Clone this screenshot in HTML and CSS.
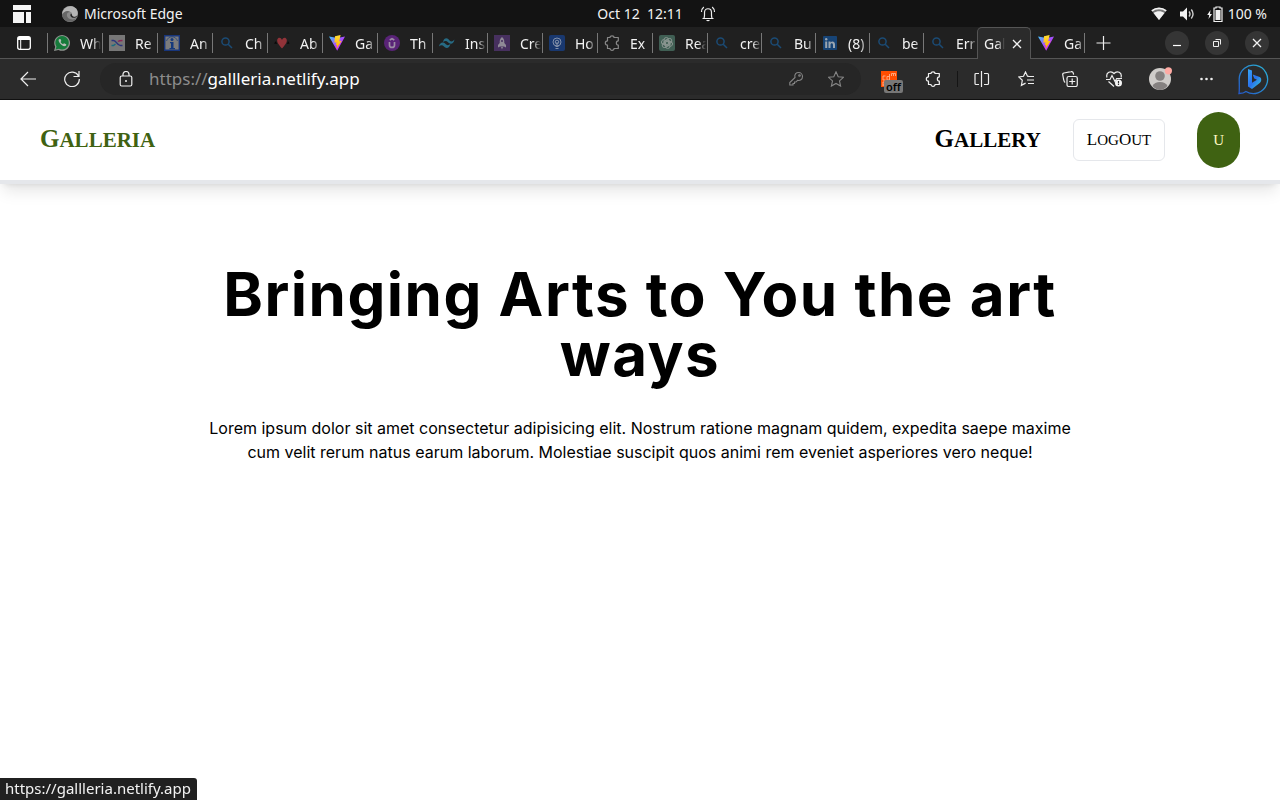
FILE: index.html
```html
<!DOCTYPE html>
<html lang="en">
<head>
<meta charset="utf-8">
<meta name="viewport" content="width=device-width, initial-scale=1">
<title>Galleria</title>
<link rel="stylesheet" href="styles.css">
</head>
<body>
<svg class="sprite" aria-hidden="true">
  <defs>
    <linearGradient id="vite-a" x1="0" y1="0" x2="1" y2="1"><stop offset="0" stop-color="#41c8ff"/><stop offset=".6" stop-color="#bd34fe"/></linearGradient>
    <linearGradient id="vite-b" x1="0" y1="0" x2="0" y2="1"><stop offset="0" stop-color="#ffdd35"/><stop offset="1" stop-color="#ffa800"/></linearGradient>
    <linearGradient id="bing-a" x1="0" y1="0" x2="1" y2="1"><stop offset="0" stop-color="#38a8f5"/><stop offset=".5" stop-color="#2a70ec"/><stop offset="1" stop-color="#35d3d8"/></linearGradient>
    <linearGradient id="bing-b" x1="1" y1="0" x2="0" y2="1"><stop offset="0" stop-color="#2bb5d8"/><stop offset="1" stop-color="#2458c8"/></linearGradient>
  </defs>
  <symbol id="search" viewBox="0 0 16 16"><circle cx="6.500" cy="6.500" r="3.600" fill="none" stroke="#1b4b75" stroke-width="1.500"/><path d="M9.200 9.200 13 13" stroke="#1b4b75" stroke-width="1.500"/></symbol>
  <symbol id="vite" viewBox="0 0 16 16"><path d="M0 1.500 8.200 15.800 16 1.500 8.500 3Z" fill="url(#vite-a)"/><path d="M11.600 0 6 1.200 5.400 7.700l2.100-.4-.8 3 1.500-.4-.9 4.300 5.400-8.400-2.500.4Z" fill="url(#vite-b)"/></symbol>
  <symbol id="puzzle" viewBox="0 0 16 16"><path d="M3.500 2.500H6C6 .2 10 .2 10 2.500H14.300V5.800C11.700 5.800 11.700 10.200 14.300 10.200V13.500H10C10 15.900 6 15.900 6 13.500H3.500V10.200C.6 10.200.6 5.800 3.500 5.800Z" fill="none" stroke="currentColor" stroke-width="1.200" stroke-linejoin="round"/></symbol>
  <symbol id="close" viewBox="0 0 16 16"><path d="m4 4 8 8M12 4l-8 8" fill="none" stroke="currentColor" stroke-width="1.300"/></symbol>
</svg>

<header class="desktop-bar">
  <div class="desktop-left">
    <svg class="icon-lg" viewBox="0 0 18 18" aria-hidden="true"><path d="M0 0h18v5H0zM0 7h11v11H0zM13 7h5v11h-5z" fill="#f5f5f5"/></svg>
    <svg class="icon edge-icon" viewBox="0 0 16 16" aria-hidden="true"><circle cx="8" cy="8" r="8" fill="#8a8a8a"/><path d="M0 8C1 2 6-1 11 .6 16 2.500 17 8 14 10 11 11 9 10 10 8 10 5 4 4 0 8Z" fill="#b5b5b5"/><path d="M5 8c-1 4 4 7 9 4.500C10 18 1 16 0 9 2 5 6 4 8 6 6 6 5 7 5 8Z" fill="#666"/><path d="M9 7.500c1.500 1 .5 2.500 2.500 3.200 1.700.5 3 0 4-1-.6 1.800-3.500 2.600-5.500 1.800C8 10.500 8 8.500 9 7.500Z" fill="#222"/></svg>
    <span>Microsoft Edge</span>
  </div>
  <time>Oct 12&nbsp; 12:11</time>
  <div class="desktop-right">
    <svg class="icon bell" viewBox="0 0 16 16" fill="none" stroke="#eee" stroke-width="1.200" aria-hidden="true"><path d="M2.500 12.500h11M4 12.500C4.800 10 4.500 8.500 4.500 6.500c0-5 7-5 7 0 0 2-.3 3.500.5 6M3.800 1C2 2.500 1.500 4 1.500 6M12.200 1c1.800 1.500 2.300 3 2.300 5"/><path d="M6 14h4q-2 2.500-4 0Z" fill="#eee" stroke="none"/></svg>
    <svg class="icon" viewBox="0 0 16 16" aria-hidden="true"><path d="M.5 4.500C5 .9 11 .9 15.500 4.500L8 14Z" fill="#777"/><path d="M2.500 7C6 4.500 10 4.500 13.500 7L8 14Z" fill="#f2f2f2"/><path d="M.8 4.800C5 1.500 11 1.500 15.200 4.800" stroke="#f2f2f2" fill="none" stroke-width="1.600"/></svg>
    <svg class="icon volume" viewBox="0 0 16 16" aria-hidden="true"><path d="M1 5.500h3L8 1.500v13L4 10.500H1z" fill="#f2f2f2"/><path d="M10 5.500q2 2.500 0 5M12.300 3.500q3.500 4.500 0 9" stroke="#ccc" fill="none" stroke-width="1.400"/></svg>
    <svg class="icon" viewBox="0 0 16 16" aria-hidden="true"><path d="M3.500 4 .2 9h2l-.7 4L5 8H3z" fill="#f2f2f2"/><path d="M9 1h4v1h2v13.500H7V2h2z" fill="none" stroke="#f2f2f2" stroke-width="1.200"/><path d="M8.500 4h5v10h-5z" fill="#f2f2f2"/></svg>
    <span class="battery">100 %</span>
  </div>
</header>

<div class="tab-bar">
  <button class="tab-actions" aria-label="Tab actions"><svg class="icon" viewBox="0 0 16 16" aria-hidden="true"><rect x="1.700" y="1.700" width="12.600" height="12.600" rx="2" fill="none" stroke="#fff" stroke-width="1.300"/><path d="M2 2h12v3H2z" fill="#fff"/><path d="M4.700 4v10" stroke="#fff"/></svg></button>
  <nav class="tabs" aria-label="Browser tabs">
    <button class="tab"><svg class="icon" viewBox="0 0 16 16" aria-hidden="true"><path d="m0 16 1.200-4.200A7.900 7.900 0 1 1 4.500 15Z" fill="#8e9490"/><path d="m1.600 14.400.9-2.900A6.700 6.700 0 1 1 5 13.700Z" fill="#167b3b"/><path d="M5.700 4c-1.500.3-1.500 2 0 4 1.800 2.500 4 3.500 5.500 3 1-.3 1.200-1.200 1-1.800L10 8.200 9 9.300C7.800 8.800 7 8 6.500 7l.8-1-.8-2Z" fill="#b8bdb9"/></svg><span>Wh</span></button>
    <button class="tab"><svg class="icon" viewBox="0 0 16 16" aria-hidden="true"><path d="M0 0h16v16H0z" fill="#777"/><path d="M2.500 5.500h2c3 0 3.500 5 7 5h2" stroke="#2b357c" stroke-width="1.500" fill="none"/><path d="M2.500 10.500h2L6.500 9" stroke="#176c7f" stroke-width="1.500" fill="none"/><path d="M9 6.500c1-1 2-1 4.500-1" stroke="#8b2855" stroke-width="1.500" fill="none"/></svg><span>Re</span></button>
    <button class="tab"><svg class="icon" viewBox="0 0 16 16" aria-hidden="true"><path d="M.7.7h14.600v14.600H.7z" fill="#7c7c7c" stroke="#17357b" stroke-width="1.400"/><circle cx="8" cy="4.500" r="1.500" fill="#15397c"/><path d="M6 7h3.500v6H11v1.300H5.500V13H7V8.300H6z" fill="#15397c"/><path d="M2.500 6Q4 1.800 8 1.800T13.500 6" stroke="#15397c" stroke-width=".7" fill="none"/></svg><span>An</span></button>
    <button class="tab"><svg class="icon" aria-hidden="true"><use href="#search"/></svg><span>Ch</span></button>
    <button class="tab"><svg class="icon" viewBox="0 0 16 16" aria-hidden="true"><path d="m2 6-2 2.500 3 .5zM14 6l1.500 2.500L13 9z" fill="#080808"/><path d="M8 13.500C4 9 2.700 7 3.300 4.500 4.300 2 7 2.500 8 5c1-2.500 3.700-3 4.700-.5.600 2.500-.7 4.500-4.700 9Z" fill="#913339"/></svg><span>Ab</span></button>
    <button class="tab"><svg class="icon" aria-hidden="true"><use href="#vite"/></svg><span>Ga</span></button>
    <button class="tab"><svg class="icon" viewBox="0 0 16 16" aria-hidden="true"><circle cx="8" cy="8" r="8" fill="#592377"/><path d="M5.500 7v3.200c0 3 5 3 5 0V7M5.700 5 8 3.800 10.300 5" fill="none" stroke="#9b8ca3" stroke-width="1.700"/></svg><span>Th</span></button>
    <button class="tab"><svg class="icon" viewBox="0 0 16 16" aria-hidden="true"><path d="M4 7c1-5 5-4 6-2 1.500 2 3.500 2 5.500-.5-1 5.500-5 4.500-6.500 2.700C7.500 5.500 6 5.500 4 7ZM0 11.500c1-5 5-4.500 6.500-2.500 1.500 1.700 3.500 1.500 5-.5-1 5.500-5 5-6.500 3-1.500-1.700-3.500-1.500-5 0Z" fill="#276b84"/></svg><span>Ins</span></button>
    <button class="tab"><svg class="icon" viewBox="0 0 16 16" aria-hidden="true"><path d="M0 0h16v16H0z" fill="#47305f"/><path d="M8 2c2 1.500 2.500 3.500 2.300 6l1.700 2v2.500L10 11.500H6L4 12.500V10l1.700-2C5.500 5.500 6 3.500 8 2Zm-1 10h2l-1 2.500Z" fill="#8f8a96"/><circle cx="8" cy="6" r="1" fill="#47305f"/></svg><span>Cre</span></button>
    <button class="tab"><svg class="icon" viewBox="0 0 16 16" aria-hidden="true"><rect width="16" height="16" rx="2" fill="#19386f"/><circle cx="8" cy="7" r="4" fill="none" stroke="#8290a9"/><circle cx="8" cy="7" r="1.800" fill="none" stroke="#8290a9"/><path d="M6.500 11.500h3M6.500 13.500h3M8 7v4" stroke="#8290a9"/></svg><span>Ho</span></button>
    <button class="tab"><svg class="icon dim" aria-hidden="true"><use href="#puzzle"/></svg><span>Ex</span></button>
    <button class="tab"><svg class="icon" viewBox="0 0 16 16" aria-hidden="true"><rect width="16" height="16" rx="2" fill="#405f54"/><g fill="none" stroke="#8b9691" stroke-width=".9"><rect x="5" y="2.500" width="4.500" height="8" rx="2.200" id="knot"/><use href="#knot" transform="rotate(60 8 8)"/><use href="#knot" transform="rotate(120 8 8)"/><use href="#knot" transform="rotate(180 8 8)"/><use href="#knot" transform="rotate(240 8 8)"/><use href="#knot" transform="rotate(300 8 8)"/></g></svg><span>Rea</span></button>
    <button class="tab narrow"><svg class="icon" aria-hidden="true"><use href="#search"/></svg><span>cre</span></button>
    <button class="tab narrow"><svg class="icon" aria-hidden="true"><use href="#search"/></svg><span>Bu</span></button>
    <button class="tab narrow"><svg class="icon" viewBox="0 0 16 16" aria-hidden="true"><rect x="1" y="1" width="14" height="14" rx="1" fill="#174476"/><circle cx="4.200" cy="4.200" r="1.200" fill="#9aa5b0"/><path d="M3.200 6.500h2V13h-2zM6.500 6.500h2v1c1.500-2 4.500-1.200 4.500 2V13h-2v-3c0-2.300-2.500-2.300-2.500 0v3h-2z" fill="#9aa5b0"/></svg><span>(8)</span></button>
    <button class="tab narrow"><svg class="icon" aria-hidden="true"><use href="#search"/></svg><span>be</span></button>
    <button class="tab narrow"><svg class="icon" aria-hidden="true"><use href="#search"/></svg><span>Err</span></button>
    <button class="tab narrow active" aria-current="page"><span>Gal</span><svg class="icon" aria-hidden="true"><use href="#close"/></svg></button>
    <button class="tab narrow after-active"><svg class="icon" aria-hidden="true"><use href="#vite"/></svg><span>Ga</span></button>
  </nav>
  <button class="new-tab" aria-label="New tab"><svg class="icon" viewBox="0 0 16 16" aria-hidden="true"><path d="M8.500 1v14M1.500 8h14" stroke="#eee" stroke-width="1.200"/></svg></button>
  <div class="window-controls">
    <button aria-label="Minimize"><svg class="icon" viewBox="0 0 16 16" aria-hidden="true"><path d="M4 10.500h8" stroke="#fff" stroke-width="1.200"/></svg></button>
    <button aria-label="Restore"><svg class="icon" viewBox="0 0 16 16" aria-hidden="true"><path d="M4.500 6.500h5v5h-5zM6.500 4.500h5v5" stroke="#eee" fill="none"/></svg></button>
    <button aria-label="Close"><svg class="icon" aria-hidden="true"><use href="#close"/></svg></button>
  </div>
</div>

<div class="toolbar">
  <button class="tool tool-nav" aria-label="Back"><svg class="icon" viewBox="0 0 16 16" aria-hidden="true"><path d="M16 8H1M8 1 1 8l7 7" fill="none" stroke="#eee" stroke-width="1.200"/></svg></button>
  <button class="tool tool-nav" aria-label="Reload"><svg class="icon" viewBox="0 0 16 16" aria-hidden="true"><path d="M14.500 5A7.300 7.300 0 1 0 15.300 8M15 0v5.500H9.500" fill="none" stroke="#eee" stroke-width="1.200"/></svg></button>
  <div class="address">
    <svg class="icon" viewBox="0 0 16 16" aria-hidden="true"><rect x="2.200" y="5" width="11.600" height="10" rx="1.500" fill="none" stroke="#eee" stroke-width="1.200"/><path d="M5 5V3.500c0-4 6-4 6 0V5" fill="none" stroke="#eee" stroke-width="1.200"/><circle cx="8" cy="10" r="1" fill="#eee"/></svg>
    <label class="scheme" for="url">https://</label><input id="url" type="text" value="gallleria.netlify.app">
    <button class="address-action" aria-label="Password"><svg class="icon" viewBox="0 0 16 16" fill="none" stroke="#858585" stroke-width="1.100" aria-hidden="true"><path d="M7 6.500C6 3 8.500 1.500 10.500 1.500c2.500 0 4 2 4 4 0 3-2.500 4.500-5 3.800L8 11H6.500v1.500H5V14H1.800v-2.500Z"/><circle cx="11.500" cy="4.500" r=".8"/></svg></button>
    <button class="address-action" aria-label="Add to favorites"><svg class="icon" viewBox="0 0 16 16" aria-hidden="true"><path d="m8 .8 2.200 4.900 5.300.6-4 3.600 1.100 5.200L8 12.500l-4.600 2.600 1.100-5.200-4-3.600 5.300-.6Z" fill="none" stroke="#858585" stroke-width="1.100"/></svg></button>
  </div>
  <button class="tool extension" aria-label="Extension"><svg class="icon" viewBox="0 0 16 16" aria-hidden="true"><path d="M0 0h16v16H0z" fill="#ff4d00"/><path d="M4.500 5H2v4h2.500M8.500 3v6H6V5.500h2.500M10.500 5V2.500h2V5M12.500 2.500h2V5M2 15v-4h3v3H2" fill="none" stroke="#ffb08a" stroke-width=".9"/></svg><span class="off">off</span></button>
  <button class="tool" aria-label="Extensions"><svg class="icon" aria-hidden="true"><use href="#puzzle"/></svg></button>
  <span class="divider"></span>
  <button class="tool" aria-label="Split screen"><svg class="icon" viewBox="0 0 16 16" fill="none" stroke="#eee" stroke-width="1.200" aria-hidden="true"><path d="M5 2.500H2q-1 0-1 1v9q0 1 1 1h3M10 2.500h3.500q1 0 1 1v9q0 1-1 1H10M7.500 0v16"/></svg></button>
  <button class="tool" aria-label="Favorites"><svg class="icon" viewBox="0 0 16 16" fill="none" stroke="#eee" stroke-width="1.200" aria-hidden="true"><path d="M11 5.500 9.500 5.200 7.500 1 5.500 5.300.8 6l3.500 3.300-.9 5 4.200-2.200M10.500 5.500H16M9 9h7M10 12.500h6"/></svg></button>
  <button class="tool" aria-label="Collections"><svg class="icon" viewBox="0 0 16 16" fill="none" stroke="#eee" stroke-width="1.200" aria-hidden="true"><rect x="5" y="5.500" width="10.300" height="10" rx="1.800"/><path d="M10.200 7.500v6M7.200 10.500h6M3.200 11.500C2 11 2 10 1.500 8L.8 4C.5 2.800 1 2.200 2 2l7-1.300c1.300-.3 2 .2 2.300 1.400l.3 1.600"/></svg></button>
  <button class="tool" aria-label="Browser essentials"><svg class="icon" viewBox="0 0 16 16" fill="none" stroke="#eee" stroke-width="1.200" aria-hidden="true"><path d="M1 6.500C-.5 1.500 5-1 8 2.500c3-3.500 8.500-1 7 4M0 8.500h4l2-4 3 6 1.700-3H16M2.500 10.500 8 15.500"/><circle cx="12.500" cy="12" r="3.500" fill="#f5f5f5" stroke="none"/><path d="M12.500 10v2.500M12.500 13v1" stroke="#333"/></svg></button>
  <button class="tool profile" aria-label="Profile"><svg class="icon-xl" viewBox="0 0 24 24" aria-hidden="true"><circle cx="12" cy="12" r="11" fill="#cfccc9"/><circle cx="12" cy="9" r="4.800" fill="#858180"/><path d="M4.500 19q2-4 7.500-4t7.500 4Q12 27 4.500 19Z" fill="#858180"/><circle cx="20.400" cy="3.800" r="3.600" fill="#ffaaa3"/></svg></button>
  <button class="tool more" aria-label="Settings and more"><svg class="icon" viewBox="0 0 16 16" fill="#eee" aria-hidden="true"><circle cx="2.500" cy="8" r="1.300"/><circle cx="7.500" cy="8" r="1.300"/><circle cx="12.500" cy="8" r="1.300"/></svg></button>
  <button class="tool profile" aria-label="Bing"><svg class="icon-bing" viewBox="0 0 32 32" aria-hidden="true"><path d="M2 30.500Q2.500 28 2.200 16A14.200 14.200 0 1 1 9 28.500C7 30.200 5 30.500 2 30.500Z" fill="none" stroke="url(#bing-b)" stroke-width="1.300"/><path d="m11 6 4 1.500v12.200l5-2.900-2.700-1.200-1.600-4 7 2.400c2 .7 2 4.500 0 6L15 26l-4-2.600Z" fill="url(#bing-a)"/></svg></button>
</div>

<div class="page">
  <nav class="site-nav">
    <a class="brand" href="#">Galleria</a>
    <div class="site-links">
      <a class="brand gallery" href="#">Gallery</a>
      <button class="logout"><span>Log</span><span>Out</span></button>
      <button class="user">U</button>
    </div>
  </nav>
  <main class="hero">
    <h1>Bringing Arts to You the art ways</h1>
    <p>Lorem ipsum dolor sit amet consectetur adipisicing elit. Nostrum ratione magnam quidem, expedita saepe maxime cum velit rerum natus earum laborum. Molestiae suscipit quos animi rem eveniet asperiores vero neque!</p>
  </main>
</div>
<div class="status" role="status">https://gallleria.netlify.app</div>
</body>
</html>
```
FILE: styles.css
```css
* { box-sizing: border-box; }

body {
  margin: 0;
  min-height: 100vh;
  display: flex;
  flex-direction: column;
  background: #fff;
  color: #000;
  font-family: Inter, sans-serif;
}

button {
  margin: 0;
  padding: 0;
  border: 0;
  background: none;
  color: inherit;
  font: inherit;
}

svg { display: block; flex: none; }
.sprite { position: absolute; width: 0; height: 0; }
.icon { width: 16px; height: 16px; }
.icon-lg { width: 18px; height: 18px; }
.icon-xl { width: 24px; height: 24px; }
.icon-bing { width: 32px; height: 32px; }

.desktop-bar, .tab-bar, .toolbar, .status {
  font-family: "Noto Sans", sans-serif;
  color: #f2f2f2;
}

/* Desktop panel */
.desktop-bar {
  height: 27px;
  padding: 0 13px;
  display: grid;
  grid-template-columns: 1fr auto 1fr;
  align-items: center;
  background: #131313;
  font-size: 14px;
  line-height: 20px;
}
.desktop-left, .desktop-right { display: flex; align-items: center; }
.edge-icon { margin: 0 6px 0 31px; }
.desktop-right { gap: 12px; }
.bell { margin: 0 auto 0 17px; }
.battery { margin-left: -7px; }

/* Tab strip */
.tab-bar {
  height: 32px;
  display: flex;
  background: #202020;
  border-bottom: 1px solid #555;
  font-size: 14px;
}
.tab-actions { width: 47px; padding-left: 16px; }
.tabs { display: flex; height: 32px; }
.tab {
  width: 55px;
  height: 32px;
  padding-left: 7px;
  display: flex;
  align-items: center;
  gap: 10px;
  background: linear-gradient(#777, #777) 0 6px / 1px 20px no-repeat;
}
.tab span {
  width: 21px;
  overflow: hidden;
  text-align: left;
  white-space: nowrap;
  -webkit-mask-image: linear-gradient(90deg, #000 60%, transparent);
  mask-image: linear-gradient(90deg, #000 60%, transparent);
}
.narrow { width: 54px; }
.dim { color: #888; }
.tab.active {
  padding-left: 6px;
  gap: 4px;
  background: #2b2b2b;
  border: 1px solid #555;
  border-bottom: 0;
  border-radius: 5px 5px 0 0;
}
.tab.after-active { background-position: 100% 6px; }
.new-tab { padding: 0 10px; }
.window-controls {
  margin-left: auto;
  padding-right: 11px;
  display: flex;
  align-items: center;
  gap: 16px;
}
.window-controls button {
  width: 24px;
  height: 24px;
  display: grid;
  place-items: center;
  border-radius: 50%;
  background: #353535;
}

/* Address toolbar */
.toolbar {
  height: 41px;
  padding: 0 3px 0 8px;
  display: flex;
  align-items: center;
  background: #2b2b2b;
  border-bottom: 1px solid #111;
}
.tool {
  width: 44px;
  height: 32px;
  display: grid;
  place-items: center;
}
.tool-nav { width: 40px; margin-right: 4px; }
.address {
  flex: 1;
  min-width: 0;
  height: 32px;
  margin: 0 6px 0 4px;
  padding: 0 5px 0 18px;
  display: flex;
  align-items: center;
  background: #262626;
  border-radius: 16px;
  font-size: 17px;
  line-height: 22px;
}
.scheme { margin-left: 15px; color: #8c8c8c; }
.address input {
  flex: 1;
  min-width: 0;
  height: 22px;
  padding: 0;
  border: 0;
  outline: 0;
  background: none;
  color: #fff;
  font: inherit;
}
.address-action {
  width: 40px;
  height: 32px;
  display: grid;
  place-items: center;
}
.extension { position: relative; }
.off {
  position: absolute;
  right: 8px;
  bottom: 2px;
  padding: 0 2px;
  border-radius: 2px;
  background: #777;
  color: #000;
  font-size: 11px;
  font-weight: 600;
  line-height: 13px;
}
.divider { width: 1px; height: 16px; margin: 0 2px; background: #151515; }
.profile { width: 48px; }
.more { width: 45px; }

/* Site */
.page { flex: 1; }
.site-nav {
  padding: 12px 40px;
  display: flex;
  align-items: center;
  justify-content: space-between;
  background: #fff;
  border-bottom: 4px solid #e5e7eb;
  box-shadow: 0 10px 15px -3px rgba(0, 0, 0, .1), 0 4px 6px -4px rgba(0, 0, 0, .1);
  font-family: "Liberation Serif", serif;
}
.site-links { display: flex; align-items: center; gap: 32px; }
.brand {
  display: inline-block;
  color: #3f6212;
  font-size: 21px;
  font-weight: 700;
  line-height: 30px;
  padding-bottom: 2px;
  text-transform: uppercase;
  text-decoration: none;
}
.brand::first-letter { font-size: 25px; }
.gallery { color: #000; }
.logout {
  padding: 8px 13px;
  border: 1px solid #e5e7eb;
  border-radius: 6px;
  font-size: 15px;
  line-height: 24px;
  text-transform: uppercase;
}
.logout span { display: inline-block; }
.logout span::first-letter { font-size: 17px; }
.user {
  padding: 16px;
  border-radius: 24px;
  background: #3f6212;
  color: #fef9c3;
  font-size: 15px;
  line-height: 24px;
}

.hero {
  max-width: 896px;
  margin: 0 auto;
  padding: 80px 16px;
  text-align: center;
}
.hero h1 {
  margin: 0 0 32px;
  font-size: 60px;
  font-weight: 700;
  line-height: 60px;
  letter-spacing: 0.025em;
}
.hero p { margin: 0; font-size: 16px; line-height: 24px; }

/* Link preview */
.status {
  position: fixed;
  left: 0;
  bottom: 0;
  padding: 0 6px 2px 5px;
  border-radius: 0 3px 0 0;
  background: #202020;
  font-size: 15px;
  line-height: 20px;
}
```
